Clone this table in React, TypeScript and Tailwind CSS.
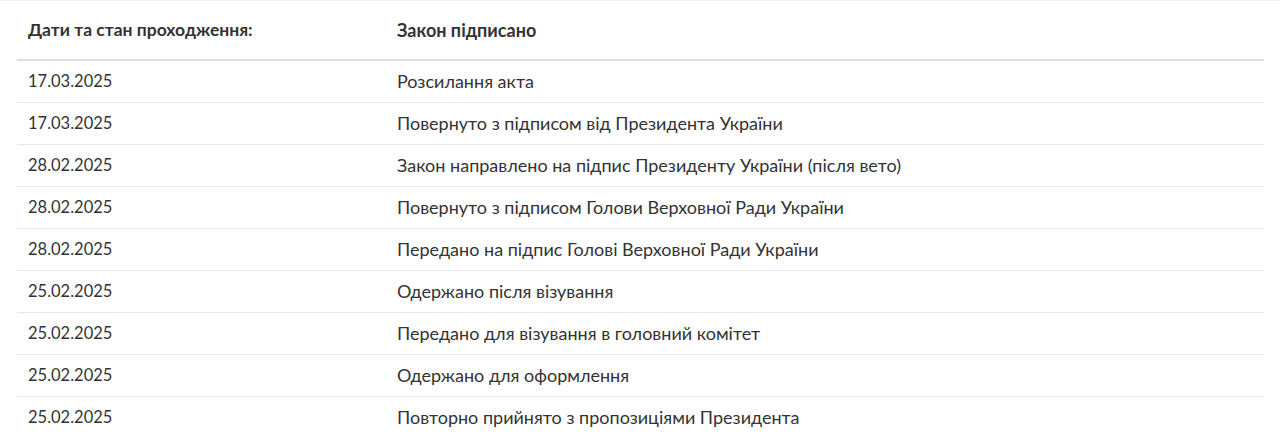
const rows: [string, string][] = [
  ["17.03.2025", "Розсилання акта"],
  ["17.03.2025", "Повернуто з підписом від Президента України"],
  ["28.02.2025", "Закон направлено на підпис Президенту України (після вето)"],
  ["28.02.2025", "Повернуто з підписом Голови Верховної Ради України"],
  ["28.02.2025", "Передано на підпис Голові Верховної Ради України"],
  ["25.02.2025", "Одержано після візування"],
  ["25.02.2025", "Передано для візування в головний комітет"],
  ["25.02.2025", "Одержано для оформлення"],
  ["25.02.2025", "Повторно прийнято з пропозиціями Президента"],
]

export default function App() {
  return (
    <div
      className="min-h-screen bg-white border-t border-[#f2f2f2] text-[#333]"
      style={{ fontFamily: "Lato, 'Liberation Sans', sans-serif" }}
    >
      <div className="ml-[17px] w-[1247px]">
        {/* header */}
        <div className="grid grid-cols-[369px_1fr] h-[60px] items-center border-b-2 border-[#dedede] font-bold">
          <div className="pl-[11px] text-[17.5px]">Дати та стан проходження:</div>
          <div className="pl-[11px] text-[18px]">Закон підписано</div>
        </div>
        {rows.map(([date, text], i) => (
          <div
            key={i}
            className="grid grid-cols-[369px_1fr] h-[42px] items-center border-b border-[#e8e8e8]"
          >
            <div className="pl-[11px] text-[16.5px]">{date}</div>
            <div className="pl-[11px] text-[18px]">{text}</div>
          </div>
        ))}
      </div>
    </div>
  )
}
